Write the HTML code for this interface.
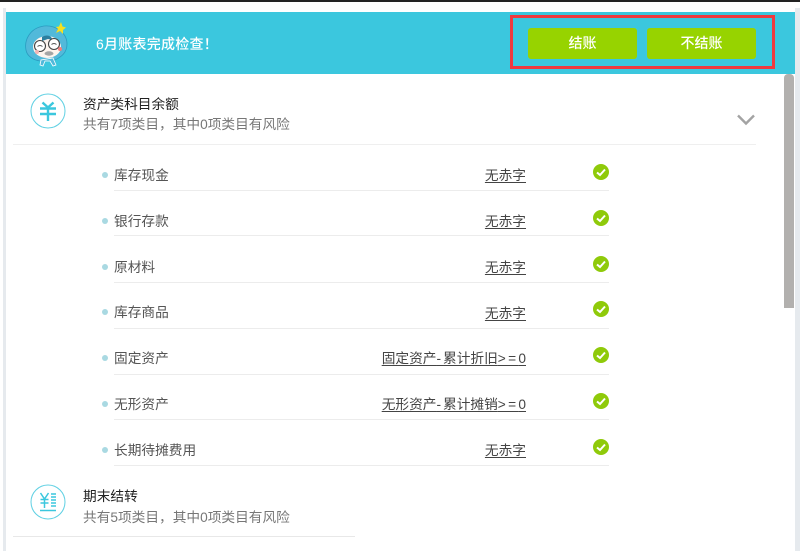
<!DOCTYPE html>
<html lang="zh">
<head>
<meta charset="utf-8">
<style>
html,body{margin:0;padding:0;background:#fff}
body{width:800px;height:551px;position:relative;overflow:hidden;font-family:"Liberation Sans","Noto Sans CJK SC",sans-serif;font-size:13.7px;color:#555}
.a{position:absolute}
.t{position:absolute;white-space:nowrap;line-height:20px}
.u{text-decoration:underline;text-underline-offset:2px;text-align:right;right:274px;color:#444}
.s{letter-spacing:2.3px}
.l{position:absolute;left:114px;width:495px;height:1px;background:#ececec}
.d{position:absolute;left:102px;width:6px;height:6px;border-radius:50%;background:#a9d9e2}
.c{position:absolute;left:593px;width:16px;height:16px}
.btn{position:absolute;top:28px;height:31px;width:109px;background:#97d300;border-radius:3px;color:#fff;text-align:center;line-height:31px;font-size:14px;font-weight:500}
</style>
</head>
<body>
<div class="a" style="left:0;top:0;width:800px;height:2px;background:#222"></div>
<div class="a" style="left:3px;top:8px;width:3px;height:543px;background:#e6eaee"></div>
<div class="a" style="left:795px;top:8px;width:5px;height:543px;background:#e6eaee"></div>
<div class="a" style="left:6px;top:12px;width:789px;height:62px;background:#3bc7de"></div>

<svg class="a" style="left:24px;top:20px" width="48" height="50" viewBox="0 0 48 50">
<path d="M2 30C0 20 6 8 20 6c12-1 23 7 23 18 0 9-6 13-12 16l-15 1C9 40 3 36 2 30z" fill="#52b9da" stroke="#2a9cc0" stroke-width=".8"/>
<ellipse cx="23" cy="27" rx="14" ry="11" fill="#fdf4ee"/>
<path d="M18 17c3-2 7-2 9 0l2 3-5-1-3 1-3 1z" fill="#2c7fa0"/>
<circle cx="16" cy="26" r="5.500" fill="#fff" stroke="#444" stroke-width="1.100"/>
<circle cx="30" cy="24" r="5.500" fill="#fff" stroke="#444" stroke-width="1.100"/>
<path d="M13.500 26.500q2.500-2 5 0M27.500 24.500q2.500-2 5 0" fill="none" stroke="#555" stroke-width=".9"/>
<circle cx="13" cy="32" r="2" fill="#f5b5b5"/><circle cx="36" cy="29" r="2" fill="#f07f7f"/>
<ellipse cx="25" cy="33.500" rx="4.500" ry="2.200" fill="#a5a5a5"/>
<path d="M17 40l-1 5 3 1 2-5h5l3 5 3-1-3-7z" fill="#52b9da" stroke="#fff" stroke-width=".8"/>
<path d="M37 2l1.500 4.500 3.500 1-3 2.500 0 4-3-3-4 2 2-4-2-2 3-.5z" fill="#f6e020"/>
</svg>

<div class="t" style="left:96px;top:34px;color:#fff;font-size:14px;font-weight:500;letter-spacing:.25px">6月账表完成检查！</div>

<div class="a" style="left:510px;top:15px;width:259px;height:48px;border:3px solid #ef3a3f"></div>
<div class="btn" style="left:528px">结账</div>
<div class="btn" style="left:647px">不结账</div>

<div class="a" style="left:784px;top:74px;width:10px;height:234px;background:#b2b0ae;border-radius:4px 4px 0 0"></div>

<svg class="a" style="left:30px;top:93px" width="36" height="36" viewBox="0 0 36 36">
<circle cx="18" cy="18" r="17" fill="none" stroke="#5fd0e3" stroke-width="1"/>
<path d="M12.500 9.500l5.500 5 5.500-5M10 15.500h16M10 21h16M18 15v13" fill="none" stroke="#3bc7de" stroke-width="2.400"/>
</svg>
<div class="t" style="left:83px;top:95px;color:#222">资产类科目余额</div>
<div class="t" style="left:83px;top:115px;color:#777">共有7项类目，其中0项类目有风险</div>
<div class="a" style="left:13px;top:144px;width:743px;height:1px;background:#efefef"></div>
<svg class="a" style="left:737px;top:114px" width="18" height="12" viewBox="0 0 18 12"><path d="M1 1.500l8 8 8-8" fill="none" stroke="#a3a3a3" stroke-width="2.400"/></svg>

<div class="d" style="top:172px"></div><div class="t" style="left:114px;top:166px">库存现金</div><div class="t u" style="top:166px">无赤字</div><svg class="c" style="top:164px" viewBox="0 0 16 16"><circle cx="8" cy="8" r="8" fill="#8fca0a"/><path d="M4 8.500l3 2.500 5-5.500" fill="none" stroke="#fff" stroke-width="2"/></svg><div class="l" style="top:190px"></div>
<div class="d" style="top:218px"></div><div class="t" style="left:114px;top:212px">银行存款</div><div class="t u" style="top:212px">无赤字</div><svg class="c" style="top:210px" viewBox="0 0 16 16"><circle cx="8" cy="8" r="8" fill="#8fca0a"/><path d="M4 8.500l3 2.500 5-5.500" fill="none" stroke="#fff" stroke-width="2"/></svg><div class="l" style="top:235px"></div>
<div class="d" style="top:264px"></div><div class="t" style="left:114px;top:258px">原材料</div><div class="t u" style="top:258px">无赤字</div><svg class="c" style="top:256px" viewBox="0 0 16 16"><circle cx="8" cy="8" r="8" fill="#8fca0a"/><path d="M4 8.500l3 2.500 5-5.500" fill="none" stroke="#fff" stroke-width="2"/></svg><div class="l" style="top:282px"></div>
<div class="d" style="top:309px"></div><div class="t" style="left:114px;top:303px">库存商品</div><div class="t u" style="top:304px">无赤字</div><svg class="c" style="top:301px" viewBox="0 0 16 16"><circle cx="8" cy="8" r="8" fill="#8fca0a"/><path d="M4 8.500l3 2.500 5-5.500" fill="none" stroke="#fff" stroke-width="2"/></svg><div class="l" style="top:328px"></div>
<div class="d" style="top:355px"></div><div class="t" style="left:114px;top:349px">固定资产</div><div class="t u" style="top:349px">固定资产<span style="letter-spacing:2px">-</span>累计折旧<span class="s">&gt;=</span>0</div><svg class="c" style="top:347px" viewBox="0 0 16 16"><circle cx="8" cy="8" r="8" fill="#8fca0a"/><path d="M4 8.500l3 2.500 5-5.500" fill="none" stroke="#fff" stroke-width="2"/></svg><div class="l" style="top:374px"></div>
<div class="d" style="top:401px"></div><div class="t" style="left:114px;top:395px">无形资产</div><div class="t u" style="top:395px">无形资产<span style="letter-spacing:2px">-</span>累计摊销<span class="s">&gt;=</span>0</div><svg class="c" style="top:393px" viewBox="0 0 16 16"><circle cx="8" cy="8" r="8" fill="#8fca0a"/><path d="M4 8.500l3 2.500 5-5.500" fill="none" stroke="#fff" stroke-width="2"/></svg><div class="l" style="top:419px"></div>
<div class="d" style="top:447px"></div><div class="t" style="left:114px;top:441px">长期待摊费用</div><div class="t u" style="top:441px">无赤字</div><svg class="c" style="top:439px" viewBox="0 0 16 16"><circle cx="8" cy="8" r="8" fill="#8fca0a"/><path d="M4 8.500l3 2.500 5-5.500" fill="none" stroke="#fff" stroke-width="2"/></svg><div class="l" style="top:465px"></div>

<svg class="a" style="left:30px;top:484px" width="36" height="36" viewBox="0 0 36 36">
<circle cx="18" cy="18" r="17" fill="none" stroke="#5fd0e3" stroke-width="1"/>
<path d="M10.500 9l4 6 4-6M14.500 15v9M10.500 15.500h8M10.500 19h8M21 10h5M21 13h5M21 16h5M21 19h5M21 22h5M10 26.500h16" fill="none" stroke="#3bc7de" stroke-width="1.500"/>
</svg>
<div class="t" style="left:83px;top:487px;color:#222">期末结转</div>
<div class="t" style="left:83px;top:508px;color:#777">共有5项类目，其中0项类目有风险</div>
<div class="a" style="left:13px;top:536px;width:342px;height:1px;background:#e8e8e8"></div>
</body>
</html>
